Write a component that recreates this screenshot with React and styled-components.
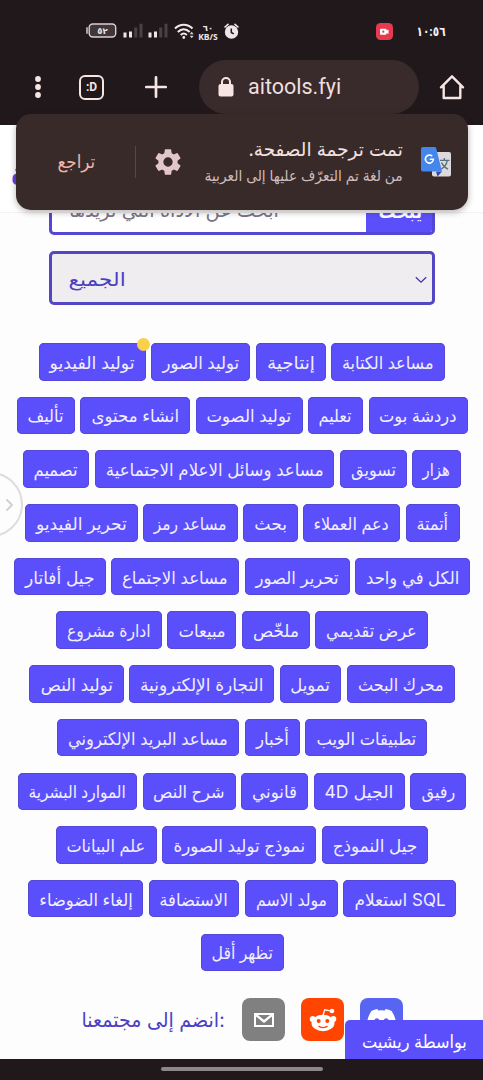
import React, { useLayoutEffect, useRef, useState } from 'react'
import styled, { createGlobalStyle, css } from 'styled-components'

const GlobalStyle = createGlobalStyle`
  * {
    box-sizing: border-box;
  }

  body {
    margin: 0;
    background: #fdfdfe;
    font-family: Inter, 'DejaVu Sans', sans-serif;
  }
`

const Screen = styled.div`
  width: 483px;
  height: 1080px;
  display: flex;
  flex-direction: column;
  overflow: hidden;
  position: relative;
  background: #fdfdfe;
`

const BrowserTop = styled.header`
  height: 125px;
  flex: none;
  background: #21181b;
  color: #f7e5e4;
`

const StatusBar = styled.div`
  height: 60px;
  padding: 2px 37px 0 86px;
  display: flex;
  align-items: center;

  svg {
    display: block;
    flex: none;
  }
`

const StatusIcons = styled.div`
  flex: 1;
  display: flex;
  align-items: center;
  gap: 5.5px;
`

const Speed = styled.div`
  width: 20px;
  margin: 1px 0 0 -2px;
  display: flex;
  flex-direction: column;
  align-items: center;
  font: 700 8.5px/9px 'Open Sans', 'DejaVu Sans', sans-serif;
  color: #eee6e7;
`

const Clock = styled.div`
  margin-left: 24px;
  color: #f5f1f2;
`

const Toolbar = styled.div`
  height: 54px;
  padding: 0 18px 0 31px;
  display: flex;
  align-items: center;

  svg {
    display: block;
    flex: none;
  }
`

const TabCount = styled.div`
  width: 25px;
  height: 25px;
  flex: none;
  margin: 0 41px 0 34px;
  border: 2.6px solid #f7e5e4;
  border-radius: 6px;
  display: flex;
  align-items: center;
  justify-content: center;
  font: 700 12px/1 Roboto, sans-serif;
`

const Address = styled.div`
  width: 220px;
  height: 54px;
  flex: none;
  margin: 0 20px 0 32px;
  padding-left: 19px;
  border-radius: 27px;
  background: #392a2b;
  display: flex;
  align-items: center;
  gap: 14px;
  font: 400 21.5px/1 Roboto, sans-serif;
  color: #eedfdf;
`

const Page = styled.main`
  flex: 1;
  position: relative;
  display: flex;
  flex-direction: column;
  align-items: center;
  overflow: hidden;
`

const SiteHeader = styled.div`
  width: 100%;
  height: 88px;
  flex: none;
  padding: 28px 0 0 11px;
  border-bottom: 1px solid #f3f2f4;
  color: #5546e0;
  font-size: 30px;
  font-weight: 700;
  line-height: 40px;
  background: #fff;
`

const SearchClip = styled.div`
  width: 386px;
  height: 22px;
  flex: none;
  display: flex;
  align-items: flex-end;
  overflow: hidden;
`

const SearchBox = styled.div`
  width: 100%;
  height: 53px;
  flex: none;
  display: flex;
  border: 3px solid #5447d3;
  border-radius: 5px;
  background: #fff;
  overflow: hidden;
`

const SearchInput = styled.div`
  flex: 1;
  padding: 11px 0 0 17px;
  color: #777486;
`

const SearchButton = styled.div`
  width: 67px;
  background: #5b4ffb;
  color: #fff;
  font-weight: 700;
  padding: 12px 0 0 13px;
  margin: 0 -1px -1px 0;
`

const CategorySelect = styled.div`
  width: 386px;
  height: 54px;
  flex: none;
  margin-top: 16px;
  padding: 3px 5px 0 17px;
  border: 3px solid #5447c4;
  border-radius: 5px;
  background: #f0edf1;
  display: flex;
  align-items: center;
  justify-content: space-between;
  color: #4b3fc4;
`

const Tags = styled.div`
  width: 100%;
  margin-top: 38px;
  padding-left: 1px;
  display: flex;
  flex-direction: column;
  align-items: center;
  gap: 16.2px;
`

const TagRow = styled.div`
  height: 37.5px;
  display: flex;
  justify-content: center;
  gap: 5.5px;
  direction: rtl;
`

const Tag = styled.div`
  width: ${({ $width }) => $width}px;
  height: 37.5px;
  flex: none;
  position: relative;
  display: flex;
  align-items: center;
  justify-content: center;
  padding-top: 2px;
  border-radius: 5px;
  background: #5b4ffb;
  box-shadow: inset 0 0 0 1px #5548d6;
  color: #f1eeff;

  ${({ $dot }) =>
    $dot &&
    css`
      &::after {
        content: '';
        position: absolute;
        top: -5px;
        right: -4px;
        width: 13px;
        height: 13px;
        border-radius: 50%;
        background: #f9cf4b;
      }
    `}
`

const Community = styled.div`
  width: 100%;
  margin-top: 27px;
  padding-left: 82px;
  display: flex;
  align-items: center;
  color: #4b3fc4;
`

const SocialButton = styled.div`
  width: 43px;
  height: 43px;
  margin-left: ${({ $gap }) => $gap}px;
  border-radius: 8px;
  background: ${({ $color }) => $color};
  display: flex;
  align-items: center;
  justify-content: center;
`

const Credit = styled.div`
  position: absolute;
  right: 0;
  bottom: 0;
  width: 138px;
  height: 39px;
  padding: 4px 0 0 1px;
  display: flex;
  align-items: center;
  justify-content: center;
  border-top-left-radius: 5px;
  background: #5b4ffb;
  color: #fff;
`

const EdgeHandle = styled.div`
  position: absolute;
  left: -42px;
  top: 347px;
  width: 65px;
  height: 65px;
  border: 2px solid #dedcdf;
  border-radius: 50%;
  display: flex;
  align-items: center;
  justify-content: flex-end;
  padding-right: 7px;
`

const Snackbar = styled.div`
  position: absolute;
  left: 16px;
  top: 114px;
  width: 452px;
  height: 96px;
  padding: 0 16px 0 41px;
  display: flex;
  align-items: center;
  border-radius: 15px;
  background: #392a2a;
  box-shadow: 0 2px 6px rgba(40, 25, 30, 0.35);

  svg {
    display: block;
    flex: none;
  }
`

const Undo = styled.div`
  color: #eeb4a9;
`

const Divider = styled.div`
  width: 1px;
  height: 32px;
  margin: 0 16px 0 40px;
  background: #56474a;
`

const Message = styled.div`
  flex: 1;
  margin-right: 17px;
  display: flex;
  flex-direction: column;
  align-items: flex-end;
  color: #f2e2e1;
`

const MessageDetail = styled.div`
  color: #cdbcbd;
`

const NavBar = styled.footer`
  height: 21px;
  flex: none;
  display: flex;
  justify-content: center;
  padding-top: 8px;
  background: #21181b;

  &::after {
    content: '';
    width: 162px;
    height: 4px;
    border-radius: 2px;
    background: #8f8688;
  }
`

const FitBox = styled.div`
  width: ${({ $width }) => $width}px;
  height: ${({ $height }) => $height}px;
  flex: none;
  display: flex;
  align-items: center;
  justify-content: center;
  white-space: nowrap;
  font-size: ${({ $size }) => $size}px;
  line-height: ${({ $height }) => $height}px;

  span {
    flex: none;
  }
`

// keeps a label at a set width, whichever Arabic face is available
const Fit = ({ width, size, height = 30, dir = 'rtl', children }) => {
  const ref = useRef(null)
  const [scale, setScale] = useState(1)

  useLayoutEffect(() => {
    setScale(width / ref.current.offsetWidth)
  }, [width, size, children])

  return (
    <FitBox $width={width} $height={height} $size={size}>
      <span ref={ref} dir={dir} style={{ transform: `scaleX(${scale})` }}>
        {children}
      </span>
    </FitBox>
  )
}

const rows = [
  [['مساعد الكتابة', 114], ['إنتاجية', 70], ['توليد الصور', 99], ['توليد الفيديو', 107, true]],
  [['دردشة بوت', 99], ['تعليم', 55], ['توليد الصوت', 107], ['انشاء محتوى', 110], ['تأليف', 58]],
  [['هزار', 49], ['تسويق', 67], ['مساعد وسائل الاعلام الاجتماعية', 239.5], ['تصميم', 66]],
  [['أتمتة', 54], ['دعم العملاء', 97], ['بحث', 54.5], ['مساعد رمز', 94.5], ['تحرير الفيديو', 113]],
  [['الكل في واحد', 115], ['تحرير الصور', 105], ['مساعد الاجتماع', 128], ['جيل أفاتار', 92]],
  [['عرض تقديمي', 113], ['ملخّص', 68], ['مبيعات', 69], ['ادارة مشروع', 106]],
  [['محرك البحث', 108], ['تمويل', 61.5], ['التجارة الإلكترونية', 145], ['توليد النص', 94.5]],
  [['تطبيقات الويب', 122], ['أخبار', 55], ['مساعد البريد الإلكتروني', 182]],
  [['رفيق', 56], ['الجيل 4D', 91], ['قانوني', 67], ['شرح النص', 93], ['الموارد البشرية', 119]],
  [['جيل النموذج', 106.5], ['نموذج توليد الصورة', 154], ['علم البيانات', 101]],
  [['SQL استعلام', 113], ['مولد الاسم', 93], ['الاستضافة', 90.5], ['إلغاء الضوضاء', 115.5]],
  [['تظهر أقل', 83]],
]

const BatteryIcon = () => (
  <svg width="31" height="16" viewBox="0 0 31 16">
    <rect x="3.2" y="1" width="26.5" height="13" rx="3.5" fill="#41373a" stroke="#d9d0d2" strokeWidth="1.4" />
    <path d="M1 5v5" stroke="#b7acaf" strokeWidth="1.8" strokeLinecap="round" />
    <text x="16.5" y="11" textAnchor="middle" fontSize="8.5" fontWeight="700" fill="#eee6e7" fontFamily="DejaVu Sans">٥٢</text>
  </svg>
)

const SignalIcon = () => (
  <svg width="20" height="16" viewBox="0 0 20 16">
    <path d="M2 14.500v-5M7.500 14.500V8.500" stroke="#eee6e7" strokeWidth="3" />
    <path d="M12.700 14.500v-10M18 14.500V.8" stroke="#4b4144" strokeWidth="3" />
  </svg>
)

const WifiIcon = () => (
  <svg width="21" height="17" viewBox="0 0 21 17" fill="none" stroke="#f2e9ea" strokeWidth="2">
    <path d="M1 5.500C6 .4 13.500.4 18.500 5.500M3.800 9C7.500 5.200 12 5.200 15.700 9M6.700 12c2-1.900 4.200-1.900 6.200 0" />
    <circle cx="9.800" cy="14.500" r="1.400" fill="#f2e9ea" stroke="none" />
    <path d="M15.700 11.300 17.700 8.800l2 2.500zM15.700 12.800l2 2.500 2-2.500z" fill="#d9d0d2" stroke="none" />
  </svg>
)

const AlarmIcon = () => (
  <svg width="15" height="17" viewBox="0 0 15 17">
    <circle cx="7.500" cy="9" r="6.700" fill="#eee6e7" />
    <path d="M1 4 4 1.300M14 4l-3-2.700" stroke="#eee6e7" strokeWidth="1.600" strokeLinecap="round" />
    <path d="M7.300 5.500v4l2.500 1.300" fill="none" stroke="#21181b" strokeWidth="1.500" />
  </svg>
)

const RecordIcon = () => (
  <svg width="17" height="17" viewBox="0 0 17 17">
    <rect width="17" height="17" rx="4.500" fill="#e43b51" />
    <path d="M5 5.700h4.500q1 0 1 1v.7l2-.9v4.500l-2-.9v.7q0 1-1 1H5q-1 0-1-1V6.700q0-1 1-1z" fill="#fff" />
    <circle cx="7.300" cy="8.700" r="1.100" fill="#e43b51" />
  </svg>
)

const MenuIcon = () => (
  <svg width="14" height="24" viewBox="0 0 14 24" fill="#f7e5e4">
    <circle cx="7" cy="4" r="2.900" />
    <circle cx="7" cy="12" r="2.900" />
    <circle cx="7" cy="20" r="2.900" />
  </svg>
)

const PlusIcon = () => (
  <svg width="22" height="22" viewBox="0 0 22 22">
    <path d="M11 1.300v19.400M1.300 11h19.400" stroke="#f7e5e4" strokeWidth="2.700" strokeLinecap="round" />
  </svg>
)

const LockIcon = () => (
  <svg width="16" height="20" viewBox="0 0 16 20">
    <rect x=".5" y="7" width="15" height="12.500" rx="2" fill="#f7e5e4" />
    <path d="M4 8V5a4 4 0 0 1 8 0v3" fill="none" stroke="#f7e5e4" strokeWidth="2" />
  </svg>
)

const HomeIcon = () => (
  <svg width="26" height="26" viewBox="0 0 26 26">
    <path
      d="M2 13.300 13 2.300l11 11M4.700 12v12h16.600V12"
      fill="none"
      stroke="#f7e5e4"
      strokeWidth="2.400"
      strokeLinejoin="round"
      strokeLinecap="round"
    />
  </svg>
)

const GearIcon = () => (
  <svg width="32" height="32" viewBox="0 0 24 24">
    <path
      fill="#e2c6c8"
      d="M19.140 12.940c.04-.3.060-.61.060-.94s-.02-.64-.07-.94l2.030-1.580a.49.490 0 0 0 .12-.61l-1.920-3.320a.49.490 0 0 0-.59-.22l-2.390.96a7 7 0 0 0-1.620-.94l-.36-2.540a.48.480 0 0 0-.48-.41h-3.840a.47.470 0 0 0-.47.410l-.36 2.540a7.400 7.400 0 0 0-1.620.94l-2.390-.96a.47.470 0 0 0-.59.220L2.740 8.870a.47.470 0 0 0 .12.610l2.030 1.580a6 6 0 0 0-.02 1.880l-2.030 1.580a.49.490 0 0 0-.12.610l1.920 3.320c.12.220.37.290.59.220l2.390-.96c.5.380 1.030.7 1.620.94l.36 2.540c.05.240.24.410.48.410h3.840c.24 0 .44-.17.470-.41l.36-2.540a7.400 7.400 0 0 0 1.620-.94l2.390.96c.22.080.47 0 .59-.22l1.920-3.320a.47.470 0 0 0-.12-.61zM12 15.500a3.500 3.500 0 1 1 0-7 3.500 3.500 0 0 1 0 7z"
    />
  </svg>
)

const TranslateIcon = () => (
  <svg width="32" height="32" viewBox="0 0 32 32">
    <rect x="12" y="6" width="19" height="24.500" rx="2" fill="#dcdadd" />
    <path d="M20 14.300h9.500M24.300 12v2.300M27.300 14.500c-.8 4-3 6.800-6.300 8.700M21.500 16.500c1.300 3 3.500 5.200 6.500 6.700" fill="none" stroke="#58717d" strokeWidth="1.300" />
    <path d="M16 25.500h6l-4.500 5z" fill="#3447a8" />
    <path d="M3 1h11.500q1.300 0 1.700 1.300L22 25.500H3q-2 0-2-2V3q0-2 2-2z" fill="#4586ed" />
    <path d="M12.200 10.200a4 4 0 1 0 1.200 3.100H9.700" fill="none" stroke="#fff" strokeWidth="1.600" />
  </svg>
)

const ChevronDown = () => (
  <svg width="12" height="8" viewBox="0 0 12 8">
    <path d="m.8 1.200 5.200 5 5.200-5" fill="none" stroke="#3d32a8" strokeWidth="1.200" />
  </svg>
)

const ChevronRight = () => (
  <svg width="9" height="14" viewBox="0 0 9 14">
    <path d="m1.500 1.500 5.500 5.500-5.500 5.500" fill="none" stroke="#cfcdd0" strokeWidth="1.800" />
  </svg>
)

const MailIcon = () => (
  <svg width="22" height="16" viewBox="0 0 22 16">
    <path d="M2 2h18v12H2z" fill="none" stroke="#fff" strokeWidth="2" />
    <path d="m3 3 8 6.500L19 3" fill="none" stroke="#fff" strokeWidth="2.300" />
  </svg>
)

const RedditIcon = () => (
  <svg width="28" height="26" viewBox="0 0 28 26">
    <circle cx="3.700" cy="12" r="3" fill="#fff" />
    <circle cx="24.300" cy="12" r="3" fill="#fff" />
    <ellipse cx="14" cy="16" rx="11.500" ry="8.300" fill="#fff" />
    <path d="m14 8.500 1.600-5.700 6 1" fill="none" stroke="#fff" strokeWidth="1.300" />
    <circle cx="23" cy="4" r="2.300" fill="#fff" />
    <circle cx="9.700" cy="14" r="2" fill="#ff4500" />
    <circle cx="18.300" cy="14" r="2" fill="#ff4500" />
    <path d="M9.500 19c2.300 2.200 6.700 2.200 9 0" fill="none" stroke="#ff4500" strokeWidth="1.300" />
  </svg>
)

const DiscordIcon = () => (
  <svg width="29" height="22" viewBox="0 0 29 22">
    <path
      d="M24.600 1.900A24 24 0 0 0 18.600 0l-.8 1.600a22 22 0 0 0-6.600 0L10.400 0a24 24 0 0 0-6 1.900C.6 7.500-.4 13 .1 18.400A24 24 0 0 0 7.500 22l1.600-2.500-2.500-1.200.6-.5c4.800 2.200 9.900 2.200 14.600 0l.6.500-2.500 1.200 1.600 2.500a24 24 0 0 0 7.400-3.600c.6-6.300-1-11.700-4.300-16.500zM9.900 15.100c-1.400 0-2.600-1.300-2.600-2.900s1.100-2.900 2.600-2.900 2.600 1.300 2.600 2.900-1.200 2.900-2.600 2.900zm9.300 0c-1.400 0-2.600-1.300-2.600-2.900s1.100-2.900 2.600-2.900 2.600 1.300 2.600 2.900-1.100 2.900-2.600 2.900z"
      fill="#fff"
    />
  </svg>
)

const App = () => {
  return (
    <>
      <GlobalStyle />
      <Screen>
        <BrowserTop>
          <StatusBar>
            <StatusIcons>
              <BatteryIcon />
              <SignalIcon />
              <SignalIcon />
              <WifiIcon />
              <Speed>
                <span>٦٠</span>
                <span>KB/S</span>
              </Speed>
              <AlarmIcon />
            </StatusIcons>
            <RecordIcon />
            <Clock>
              <Fit width={29} size={13} height={20} dir="ltr">
                <b>١٠:٥٦</b>
              </Fit>
            </Clock>
          </StatusBar>
          <Toolbar>
            <MenuIcon />
            <TabCount>:D</TabCount>
            <PlusIcon />
            <Address>
              <LockIcon />
              aitools.fyi
            </Address>
            <HomeIcon />
          </Toolbar>
        </BrowserTop>
        <Page>
          <SiteHeader>ة</SiteHeader>
          <SearchClip>
            <SearchBox>
              <SearchInput>
                <Fit width={210} size={19}>ابحث عن الأداة التي تريدها</Fit>
              </SearchInput>
              <SearchButton>
                <Fit width={44} size={19}>يبحث</Fit>
              </SearchButton>
            </SearchBox>
          </SearchClip>
          <CategorySelect>
            <Fit width={57} size={19}>الجميع</Fit>
            <ChevronDown />
          </CategorySelect>
          <Tags>
            {rows.map((row, index) => (
              <TagRow key={index}>
                {row.map(([label, width, dot]) => (
                  <Tag key={label} $width={width} $dot={dot}>
                    <Fit width={width - 22} size={17.5}>
                      {label}
                    </Fit>
                  </Tag>
                ))}
              </TagRow>
            ))}
          </Tags>
          <Community>
            <Fit width={143} size={20} dir="ltr">انضم إلى مجتمعنا:</Fit>
            <SocialButton $gap={17} $color="#808080">
              <MailIcon />
            </SocialButton>
            <SocialButton $gap={16} $color="#ff4500">
              <RedditIcon />
            </SocialButton>
            <SocialButton $gap={16} $color="#5865f2">
              <DiscordIcon />
            </SocialButton>
          </Community>
          <EdgeHandle>
            <ChevronRight />
          </EdgeHandle>
          <Credit>
            <Fit width={105} size={18}>بواسطة ريشيت</Fit>
          </Credit>
        </Page>
        <NavBar />
        <Snackbar>
          <Undo>
            <Fit width={38} size={18}>تراجع</Fit>
          </Undo>
          <Divider />
          <GearIcon />
          <Message>
            <Fit width={154} size={19} height={28}>تمت ترجمة الصفحة.</Fit>
            <MessageDetail>
              <Fit width={198} size={15} height={24}>من لغة تم التعرّف عليها إلى العربية</Fit>
            </MessageDetail>
          </Message>
          <TranslateIcon />
        </Snackbar>
      </Screen>
    </>
  )
}

export default App
